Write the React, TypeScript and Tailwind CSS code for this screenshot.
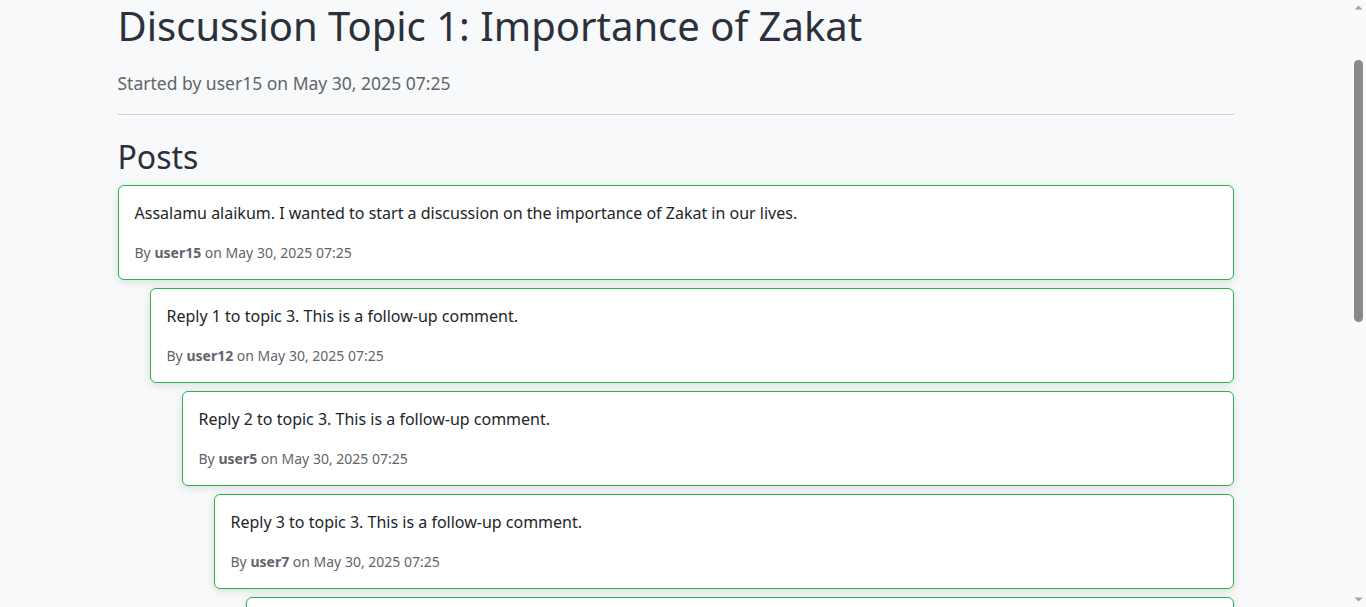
import React from "react";

type Post = { text: string; user: string; level: number };

const posts: Post[] = [
  { text: "Assalamu alaikum. I wanted to start a discussion on the importance of Zakat in our lives.", user: "user15", level: 0 },
  { text: "Reply 1 to topic 3. This is a follow-up comment.", user: "user12", level: 1 },
  { text: "Reply 2 to topic 3. This is a follow-up comment.", user: "user5", level: 2 },
  { text: "Reply 3 to topic 3. This is a follow-up comment.", user: "user7", level: 3 },
  { text: "Reply 4 to topic 3. This is a follow-up comment.", user: "user9", level: 4 },
];

const indent = ["ml-0", "ml-8", "ml-16", "ml-24", "ml-32", "ml-40"];

export default function App() {
  return (
    <div className="flex h-screen overflow-hidden bg-[#f8f9fa] text-[#212529]" style={{ fontFamily: '"Noto Sans", "Open Sans", sans-serif' }}>
      <main className="flex-1 overflow-hidden">
        <div className="mx-auto w-[1140px] px-3">
          <h1 className="pt-[2px] text-[40px] leading-[48px] font-normal text-[#2b303b]">Discussion Topic 1: Importance of Zakat</h1>
          <p className="mt-[20px] text-[17.5px] leading-[27px] text-[#5f656c]">Started by user15 on May 30, 2025 07:25</p>
          <hr className="mt-[17px] border-t border-[#cfd2d6]" />
          <h2 className="mt-[23px] mb-[9px] text-[32px] leading-[38px] font-normal text-[#2b303b]">Posts</h2>
          <div className="flex flex-col gap-2">
            {posts.map((p, i) => (
              <div
                key={i}
                className={`${indent[p.level]} rounded-[6px] border border-[#2db34a] bg-white px-4 pt-[15px] pb-[16px] shadow-[0_2px_8px_rgba(0,0,0,0.12)]`}
              >
                <p className="text-[16px] leading-[24px] text-[#212529]">{p.text}</p>
                <p className="mt-[17px] text-[14px] leading-[21px] text-[#5f656c]">
                  By <span className="font-bold">{p.user}</span> on May 30, 2025 07:25
                </p>
              </div>
            ))}
          </div>
        </div>
      </main>
      <div className="flex w-[15px] shrink-0 flex-col items-center bg-[#fafafa]">
        <svg width="15" height="17" viewBox="0 0 15 17" className="shrink-0">
          <path d="M3.5 9.5 L7.5 5.5 L11.5 9.5 Z" fill="#a3a3a3" />
        </svg>
        <div className="flex w-full flex-1 flex-col items-center">
          <div className="mt-[43px] h-[262px] w-[9px] rounded-full bg-[#8a8a8a]" />
        </div>
        <svg width="15" height="17" viewBox="0 0 15 17" className="shrink-0">
          <path d="M3.5 7.5 L7.5 11.5 L11.5 7.5 Z" fill="#a3a3a3" />
        </svg>
      </div>
    </div>
  );
}
